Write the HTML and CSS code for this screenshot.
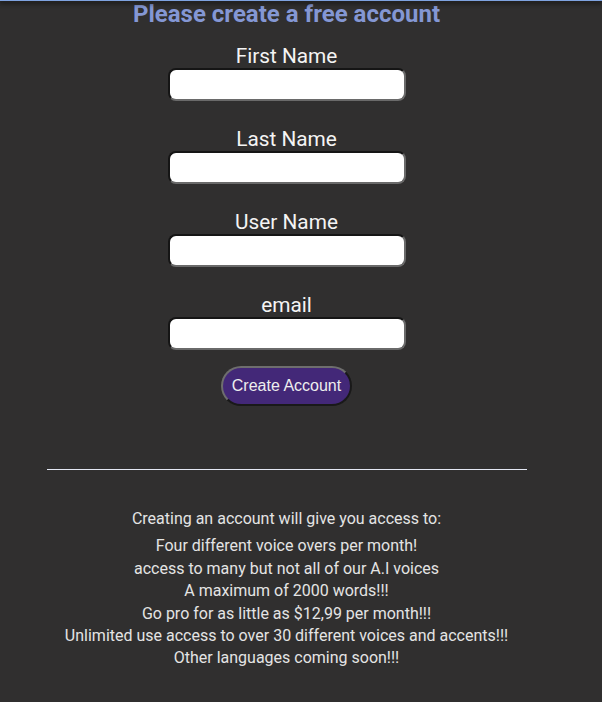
FILE: index.html
```html
<!DOCTYPE html>
<html>
<head>
<meta charset="utf-8">
<link rel="stylesheet" href="styles.css">
</head>
<body>
<div class="topbar"></div>
<main class="page">
  <h1 class="title">Please create a free account</h1>
  <form class="form">
    <label class="field"><span class="label">First Name</span><input class="input" type="text"></label>
    <label class="field"><span class="label">Last Name</span><input class="input" type="text"></label>
    <label class="field"><span class="label">User Name</span><input class="input" type="text"></label>
    <label class="field"><span class="label">email</span><input class="input" type="email"></label>
    <button class="btn" type="button">Create Account</button>
  </form>
  <hr class="rule">
  <section class="info">
    <p class="intro">Creating an account will give you access to:</p>
    <p class="list">Four different voice overs per month!<br>access to many but not all of our A.I voices<br>A maximum of 2000 words!!!<br>Go pro for as little as $12,99 per month!!!<br>Unlimited use access to over 30 different voices and accents!!!<br>Other languages coming soon!!!</p>
  </section>
</main>
</body>
</html>
```
FILE: styles.css
```css
html, body {
  margin: 0;
  padding: 0;
}
body {
  background: #302f2f;
  font-family: Roboto, "Liberation Sans", sans-serif;
  color: #f2f2f2;
  height: 702px;
  overflow: hidden;
}
.topbar {
  height: 1px;
  background: #7fa3e0;
  box-shadow: 0 1px 5px 1px #111;
  position: relative;
}
.page {
  width: 573px;
  display: flex;
  flex-direction: column;
  align-items: center;
  text-align: center;
}
.title {
  margin: 0;
  font-size: 24px;
  line-height: 26px;
  font-weight: 700;
  color: #8497d4;
}
.form {
  display: flex;
  flex-direction: column;
  align-items: center;
  margin-top: 17px;
}
.field {
  display: flex;
  flex-direction: column;
  align-items: center;
  margin-bottom: 26px;
}
.label {
  font-size: 20.8px;
  line-height: 24px;
  color: #f4f4f4;
}
.input {
  box-sizing: border-box;
  width: 238px;
  height: 33px;
  border: 2px inset #6a6a6a;
  border-radius: 8px;
  background: #fff;
  margin: 0;
}
.field:nth-child(4) {
  margin-bottom: 16px;
}
.btn {
  box-sizing: border-box;
  height: 40px;
  width: 131px;
  padding: 0;
  border: 2px outset #6e6e6e;
  border-radius: 20px;
  background: #432878;
  color: #eee;
  font-family: "Liberation Sans", Arial, sans-serif;
  font-size: 16px;
}
.rule {
  width: 480px;
  margin: 63px 0 0;
  border: 0;
  height: 1px;
  background: #e4e8f4;
}
.info {
  margin-top: 38px;
  font-size: 16px;
  line-height: 22.4px;
  color: #e4e4e4;
}
.intro {
  margin: 0 0 5px;
}
.list {
  margin: 0;
}
```
